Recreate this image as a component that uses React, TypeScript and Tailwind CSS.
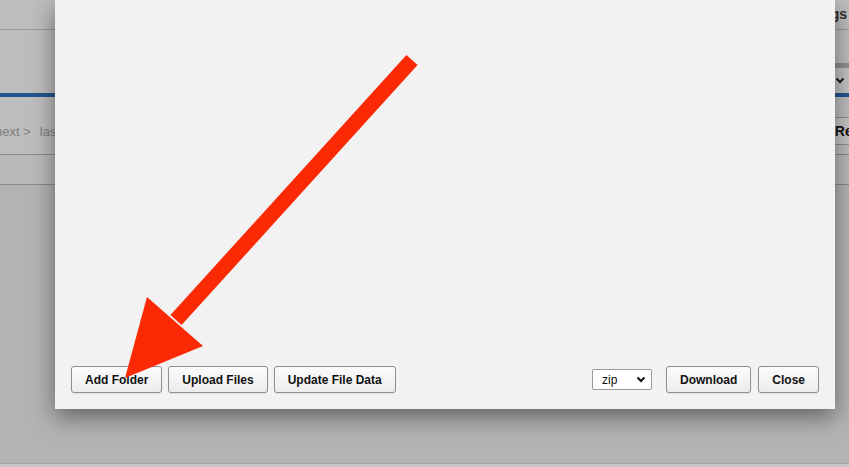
import React from 'react';

const btn =
  'h-[27px] px-[13px] rounded-[3px] border border-[#8f8f8f] bg-gradient-to-b from-[#fbfbfb] to-[#ececec] text-[12px] font-bold text-[#111] leading-none shadow-[0_1px_1px_rgba(0,0,0,0.08)]';

const App: React.FC = () => {
  return (
    <div className="relative w-[849px] h-[467px] overflow-hidden bg-[#b4b4b4] font-['Liberation_Sans',Arial,sans-serif]">
      {/* Page behind the dialog (dimmed) */}
      <div className="flex flex-col w-full h-full">
        <div className="h-[30px] shrink-0 bg-[#bdbdbd] border-b border-[#9a9a9a] flex items-center justify-end pr-[2px]">
          <span className="text-[14px] font-bold text-[#2b2b2b]">Settings</span>
        </div>
        <div className="h-[33px] shrink-0 bg-[#bdbdbd]" />
        <div className="h-[30px] shrink-0 bg-[#bdbdbd] flex justify-end">
          <div className="w-[120px] h-full border-t-[5px] border-[#8e8e8e] bg-[#c2c2c2] flex items-center justify-end pr-[4px]">
            <svg width="10" height="7" viewBox="0 0 10 7">
              <path d="M1.5 1.5 L5 5 L8.5 1.5" fill="none" stroke="#1e1e1e" strokeWidth="2" />
            </svg>
          </div>
        </div>
        <div className="h-[4px] shrink-0 bg-[#22568e]" />
        <div className="h-[58px] shrink-0 bg-[#bdbdbd] border-b border-[#8c8c8c] flex items-start justify-between pt-[20px]">
          <div className="flex gap-[9px] ml-[-5px] mt-[5px] text-[13px] text-[#7e7e7e]">
            <span>next &gt;</span>
            <span>last »</span>
          </div>
          <div className="mr-[-40px] h-[28px] px-[2px] border-t border-b border-l border-[#8f8f8f] bg-[#c4c4c4] flex items-center text-[14px] font-bold text-[#151515]">
            Refresh
          </div>
        </div>
        <div className="h-[30px] shrink-0 bg-[#b9b9b9] border-b border-[#8a8a8a]" />
        <div className="flex-1 bg-[#b3b3b3] border-b border-[#a2a2a2]" />
        <div className="h-[3px] shrink-0 bg-[#c6c6c6]" />
      </div>

      {/* Dialog */}
      <div className="absolute left-[55px] top-0 w-[780px] h-[409px] bg-[#f2f2f2] shadow-[0_8px_22px_rgba(0,0,0,0.45)] flex flex-col justify-end px-[16px] pb-[16px]">
        <div className="flex items-center justify-between">
          <div className="flex items-center gap-[6px]">
            <button className={btn}>Add Folder</button>
            <button className={btn}>Upload Files</button>
            <button className={btn}>Update File Data</button>
          </div>
          <div className="flex items-center">
            <div className="w-[60px] h-[21px] mr-[14px] rounded-[2px] border border-[#9a9a9a] bg-white flex items-center justify-between pl-[9px] pr-[5px] text-[12px] text-[#111]">
              <span>zip</span>
              <svg width="10" height="7" viewBox="0 0 10 7">
                <path d="M1.5 1.5 L5 5 L8.5 1.5" fill="none" stroke="#111" strokeWidth="2" />
              </svg>
            </div>
            <button className={btn}>Download</button>
            <button className={`${btn} ml-[7px] px-[11px]`}>Close</button>
          </div>
        </div>
      </div>

      {/* Annotation arrow */}
      <svg className="absolute inset-0 pointer-events-none" width="849" height="467" viewBox="0 0 849 467">
        <line x1="412" y1="60" x2="176" y2="320" stroke="#fb2a05" strokeWidth="15" />
        <polygon points="147,297 203,346 125,378" fill="#fb2a05" />
      </svg>
    </div>
  );
};

export default App;
